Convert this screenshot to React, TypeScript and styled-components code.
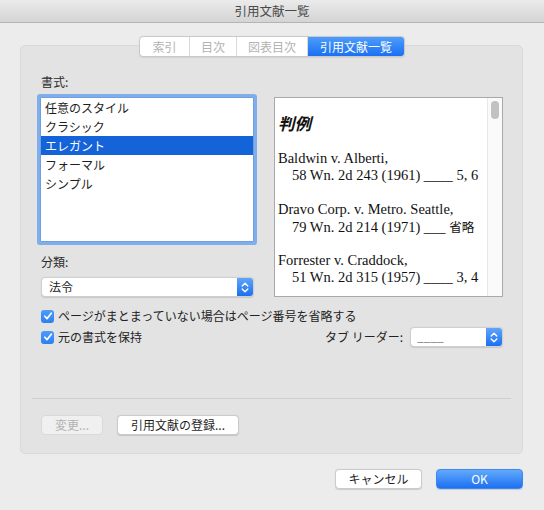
import styled, { createGlobalStyle } from "styled-components";

const GlobalStyle = createGlobalStyle`
  html, body {
    margin: 0;
    padding: 0;
    background: #ececec;
  }
  * {
    box-sizing: border-box;
  }
`;

const styles = ["任意のスタイル", "クラシック", "エレガント", "フォーマル", "シンプル"];

const tabs = [
  { label: "索引", width: 49 },
  { label: "目次", width: 47 },
  { label: "図表目次", width: 71 },
  { label: "引用文献一覧", width: 97, active: true },
];

const cases = [
  { name: "Baldwin v. Alberti,", cite: "58 Wn. 2d 243 (1961) ____ 5, 6" },
  { name: "Dravo Corp. v. Metro. Seattle,", cite: "79 Wn. 2d 214 (1971) ___ ", page: "省略" },
  { name: "Forrester v. Craddock,", cite: "51 Wn. 2d 315 (1957) ____ 3, 4" },
];

function Chevrons() {
  return (
    <svg width="8" height="13" viewBox="0 0 8 13" fill="none">
      <path d="M1.2 5 L4 2.2 L6.8 5" stroke="#fff" strokeWidth="1.4" strokeLinecap="round" strokeLinejoin="round" />
      <path d="M1.2 8 L4 10.8 L6.8 8" stroke="#fff" strokeWidth="1.4" strokeLinecap="round" strokeLinejoin="round" />
    </svg>
  );
}

function Check() {
  return (
    <svg width="10" height="10" viewBox="0 0 10 10" fill="none">
      <path d="M1.8 5.2 L4 7.6 L8.3 2.2" stroke="#fff" strokeWidth="1.7" strokeLinecap="round" strokeLinejoin="round" />
    </svg>
  );
}

function App() {
  return (
    <Window>
      <GlobalStyle />
      <TitleBar>引用文献一覧</TitleBar>
      <Body>
        <TabStrip>
          {tabs.map((t) => (
            <Tab key={t.label} $active={!!t.active} $width={t.width}>
              {t.label}
            </Tab>
          ))}
        </TabStrip>
        <GroupBox>
          <FieldLabel>書式:</FieldLabel>
          <Columns>
            <LeftCol>
              <ListBox>
                {styles.map((s) => (
                  <ListItem key={s} $selected={s === "エレガント"}>
                    {s}
                  </ListItem>
                ))}
              </ListBox>
              <FieldLabel $top={12}>分類:</FieldLabel>
              <PopUp $width={213}>
                <PopUpText>法令</PopUpText>
                <Stepper>
                  <Chevrons />
                </Stepper>
              </PopUp>
            </LeftCol>
            <Preview>
              <PreviewText>
                <CaseHeading>判例</CaseHeading>
                {cases.map((c) => (
                  <Entry key={c.name}>
                    <EntryLine>{c.name}</EntryLine>
                    <EntryLine $indent>
                      {c.cite}
                      {c.page && <PageNote>{c.page}</PageNote>}
                    </EntryLine>
                  </Entry>
                ))}
              </PreviewText>
              <ScrollTrack>
                <ScrollThumb />
              </ScrollTrack>
            </Preview>
          </Columns>
          <CheckRow $top={11}>
            <CheckGroup>
              <CheckBox>
                <Check />
              </CheckBox>
              <CheckLabel>ページがまとまっていない場合はページ番号を省略する</CheckLabel>
            </CheckGroup>
          </CheckRow>
          <CheckRow $top={3} $tall>
            <CheckGroup>
              <CheckBox>
                <Check />
              </CheckBox>
              <CheckLabel>元の書式を保持</CheckLabel>
            </CheckGroup>
            <LeaderGroup>
              <CheckLabel>タブ リーダー:</CheckLabel>
              <PopUp $width={93}>
                <LeaderText>____</LeaderText>
                <Stepper>
                  <Chevrons />
                </Stepper>
              </PopUp>
            </LeaderGroup>
          </CheckRow>
          <Separator />
          <ButtonRow>
            <PushButton $width={62} disabled>
              変更...
            </PushButton>
            <PushButton $width={122}>引用文献の登録...</PushButton>
          </ButtonRow>
        </GroupBox>
        <Footer>
          <PushButton $width={87}>キャンセル</PushButton>
          <PushButton $width={87} $primary>
            OK
          </PushButton>
        </Footer>
      </Body>
    </Window>
  );
}

const uiFont = `"Noto Sans CJK JP", "Noto Sans", sans-serif`;

const Window = styled.div`
  width: 544px;
  height: 510px;
  background: #ececec;
  font-family: ${uiFont};
  color: #222;
  overflow: hidden;
  display: flex;
  flex-direction: column;
`;

const TitleBar = styled.div`
  height: 23px;
  flex-shrink: 0;
  background: linear-gradient(#ebebeb, #d4d4d4);
  border-bottom: 1px solid #b4b4b4;
  display: flex;
  align-items: center;
  justify-content: center;
  font-size: 12.5px;
  color: #4a4a4a;
  padding-bottom: 1px;
`;

const Body = styled.div`
  display: flex;
  flex-direction: column;
  padding: 13px 21px 0 20px;
`;

const TabStrip = styled.div`
  align-self: center;
  position: relative;
  z-index: 1;
  display: flex;
  height: 21px;
  margin-left: 1px;
  background: #fff;
  border: 1px solid #c9c9c9;
  border-radius: 4px;
  overflow: hidden;
  box-shadow: 0 0.5px 1px rgba(0, 0, 0, 0.08);
`;

const Tab = styled.div<{ $active: boolean; $width: number }>`
  width: ${(p) => p.$width}px;
  display: flex;
  align-items: center;
  justify-content: center;
  font-size: 12px;
  line-height: 1;
  color: ${(p) => (p.$active ? "#fff" : "#b3b3b3")};
  background: ${(p) => (p.$active ? "linear-gradient(#4d9cfb, #1a70f2)" : "transparent")};
  & + & {
    border-left: 1px solid #d9d9d9;
  }
`;

const GroupBox = styled.div`
  margin-top: -12px;
  height: 409px;
  background: #e3e3e3;
  border: 1px solid #d9d9d9;
  border-radius: 5px;
  padding: 28px 19px 0 19px;
  display: flex;
  flex-direction: column;
`;

const FieldLabel = styled.div<{ $top?: number }>`
  margin-top: ${(p) => p.$top ?? 0}px;
  padding-left: 1px;
  height: 16px;
  font-size: 12px;
  line-height: 16px;
  color: #2a2a2a;
`;

const Columns = styled.div`
  margin-top: 7px;
  display: grid;
  grid-template-columns: 214px 229px;
  column-gap: 20px;
`;

const LeftCol = styled.div`
  display: flex;
  flex-direction: column;
`;

const ListBox = styled.div`
  height: 145px;
  background: #fff;
  border: 1px solid #6f9fe2;
  box-shadow: 0 0 0 3px #80aeea;
  border-radius: 1px;
  display: flex;
  flex-direction: column;
`;

const ListItem = styled.div<{ $selected: boolean }>`
  height: 19px;
  padding-left: 4px;
  font-size: 12px;
  line-height: 19px;
  color: ${(p) => (p.$selected ? "#fff" : "#1e1e1e")};
  background: ${(p) => (p.$selected ? "#1463d9" : "transparent")};
`;

const PopUp = styled.div<{ $width: number }>`
  width: ${(p) => p.$width}px;
  height: 20px;
  margin-top: 7px;
  margin-left: 1px;
  display: flex;
  align-items: stretch;
  background: #fff;
  border: 1px solid #cfcfcf;
  border-radius: 4px;
  box-shadow: 0 0.5px 1px rgba(0, 0, 0, 0.12);
  overflow: hidden;
`;

const PopUpText = styled.div`
  flex: 1;
  padding-left: 7px;
  font-size: 12px;
  line-height: 18px;
  color: #222;
`;

const LeaderText = styled.div`
  flex: 1;
  padding-left: 6px;
  font-size: 12px;
  line-height: 16px;
  color: #808080;
`;

const Stepper = styled.div`
  width: 16px;
  flex-shrink: 0;
  display: flex;
  align-items: center;
  justify-content: center;
  background: linear-gradient(#5ea6fa, #1b6ff1);
`;

const Preview = styled.div`
  height: 200px;
  display: flex;
  background: #fff;
  border: 1px solid #a9a9a9;
  overflow: hidden;
`;

const PreviewText = styled.div`
  flex: 1;
  padding: 14px 0 0 3px;
  font-family: "Liberation Serif", "Times New Roman", serif;
  font-size: 14.5px;
  color: #111;
  overflow: hidden;
`;

const CaseHeading = styled.div`
  height: 22px;
  margin-bottom: 16px;
  font-family: "Noto Sans CJK JP", sans-serif;
  font-size: 16.5px;
  line-height: 22px;
  font-weight: 700;
  font-style: italic;
  color: #111;
`;

const Entry = styled.div`
  margin-bottom: 17px;
`;

const EntryLine = styled.div<{ $indent?: boolean }>`
  height: 17px;
  line-height: 17px;
  white-space: nowrap;
  padding-left: ${(p) => (p.$indent ? 14 : 0)}px;
`;

const PageNote = styled.span`
  font-family: "Noto Sans CJK JP", sans-serif;
  font-size: 12.5px;
`;

const ScrollTrack = styled.div`
  width: 15px;
  flex-shrink: 0;
  background: #fafafa;
  border-left: 1px solid #e8e8e8;
  padding: 3px 0 0 3px;
`;

const ScrollThumb = styled.div`
  width: 8px;
  height: 18px;
  border-radius: 4px;
  background: #c2c2c2;
`;

const CheckRow = styled.div<{ $top: number; $tall?: boolean }>`
  margin-top: ${(p) => p.$top}px;
  height: ${(p) => (p.$tall ? 20 : 16)}px;
  display: flex;
  align-items: center;
  justify-content: space-between;
`;

const CheckGroup = styled.div`
  display: flex;
  align-items: center;
  gap: 4px;
  margin-left: 1px;
`;

const CheckBox = styled.span`
  width: 13px;
  height: 13px;
  border-radius: 3px;
  background: linear-gradient(#4e9cfa, #2a7ff4);
  display: flex;
  align-items: center;
  justify-content: center;
`;

const CheckLabel = styled.span`
  font-size: 12px;
  line-height: 16px;
  color: #222;
  white-space: nowrap;
`;

const LeaderGroup = styled.div`
  display: flex;
  align-items: center;
  gap: 7px;
  & > div {
    margin-top: 0;
    margin-left: 0;
  }
`;

const Separator = styled.div`
  margin: 51px -8px 0 -8px;
  height: 1px;
  background: #cfcfcf;
`;

const ButtonRow = styled.div`
  margin-top: 16px;
  padding-left: 1px;
  display: flex;
  gap: 14px;
`;

const PushButton = styled.button<{ $width: number; $primary?: boolean }>`
  width: ${(p) => p.$width}px;
  height: 20px;
  padding: 0;
  font-family: ${uiFont};
  font-size: 12px;
  line-height: 18px;
  border-radius: 4px;
  color: ${(p) => (p.$primary ? "#fff" : "#1f1f1f")};
  background: ${(p) => (p.$primary ? "linear-gradient(#62aafb, #1c70f2)" : "#fff")};
  border: 1px solid ${(p) => (p.$primary ? "#3d86f3" : "#cbcbcb")};
  box-shadow: 0 0.5px 1px rgba(0, 0, 0, 0.14);

  &:disabled {
    background: #f0f0f0;
    border-color: #d9d9d9;
    color: #b3b3b3;
    box-shadow: none;
  }
`;

const Footer = styled.div`
  margin-top: 15px;
  display: flex;
  justify-content: flex-end;
  gap: 14px;
`;

export default App;
